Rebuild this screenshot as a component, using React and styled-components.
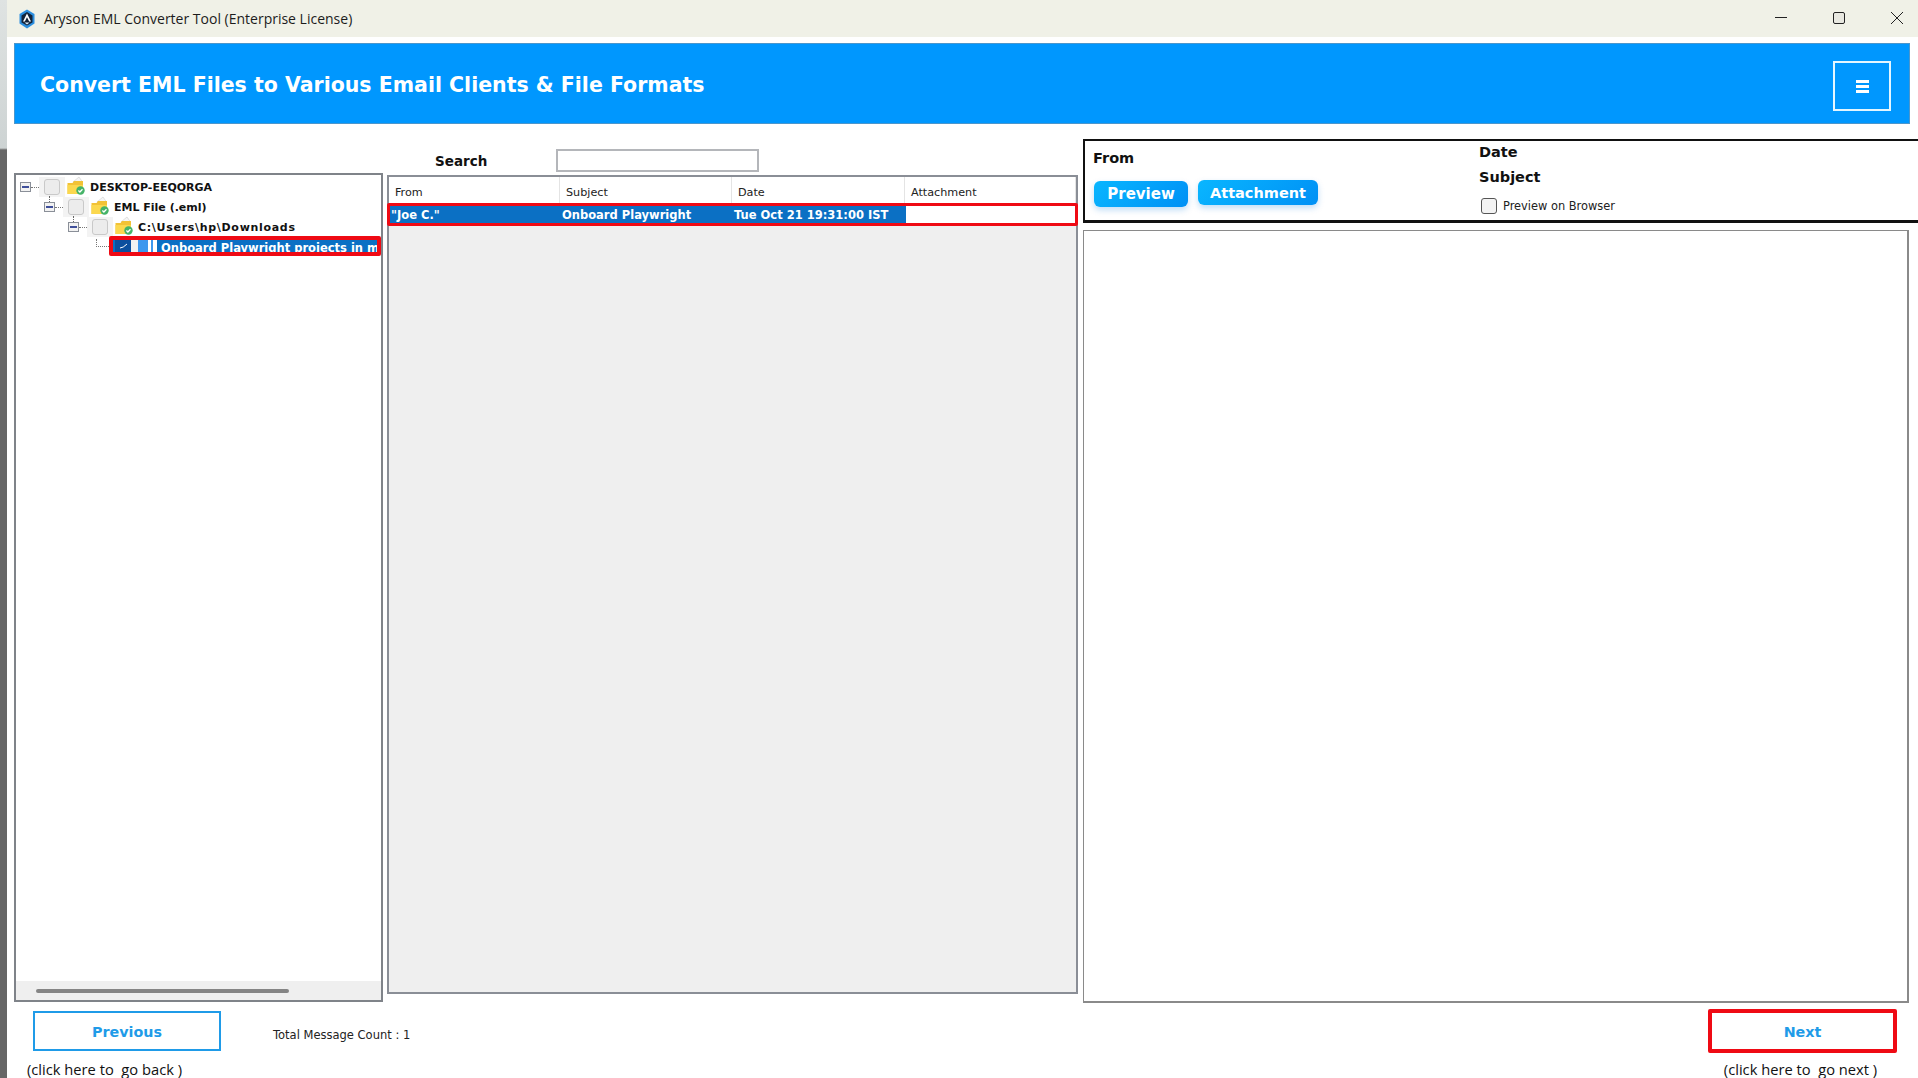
import React from 'react';
import styled, { createGlobalStyle } from 'styled-components';

const treeFont = `"DejaVu Sans", Verdana, sans-serif`;

const GlobalStyle = createGlobalStyle`
  html, body {
    margin: 0;
    padding: 0;
    height: 100%;
    overflow: hidden;
    background: #ffffff;
    font-family: ${treeFont};
  }
  * { box-sizing: border-box; }
`;

const AppLogo = () => (
  <svg width="18" height="20" viewBox="0 0 18 20">
    <path d="M9 0.5 16.5 5v9.5L9 19.5 1.5 14.5V5z" fill="#2c8fe0" />
    <path d="M9 3 14.5 6.5v7L9 16.5 3.5 13.5v-7z" fill="#12233a" />
    <path d="M9 4.5 13 12.5h-1.8L9 8.2 6.8 12.5H5z" fill="#ffffff" />
    <path d="M6.5 13.5h5L9 15.5z" fill="#d9ecfb" />
  </svg>
);

const FolderSvg = styled.svg`
  flex: none;
  margin-top: -3px;
`;

const FolderIcon = () => (
  <FolderSvg width="18" height="19" viewBox="0 0 18 19">
    <path d="M6 6 12 1l3.5 5z" fill="#f6f6f6" stroke="#cfcfcf" strokeWidth="0.6" />
    <path d="M0.5 7h5L7 5h9v13H0.5z" fill="#f2c236" />
    <path d="M0.5 9h15.5v9H0.5z" fill="#fbd84e" />
    <circle cx="13.5" cy="14.5" r="4.2" fill="#45b368" />
    <path d="M11.4 14.5l1.5 1.5 2.6-2.8" fill="none" stroke="#fff" strokeWidth="1.3" />
  </FolderSvg>
);

const Minimize = () => (
  <svg width="12" height="12" viewBox="0 0 12 12"><path d="M0 5.5h12" stroke="#222" /></svg>
);
const Maximize = () => (
  <svg width="12" height="12" viewBox="0 0 12 12"><rect x="0.5" y="0.5" width="11" height="11" rx="1.5" fill="#e8e8e0" stroke="#222" /></svg>
);
const CloseIcon = () => (
  <svg width="12" height="12" viewBox="0 0 12 12"><path d="M0 0l12 12M12 0 0 12" stroke="#222" /></svg>
);

const MenuBars = () => (
  <svg width="13" height="13" viewBox="0 0 13 13">
    <path d="M0 0h13v3H0zM0 5h13v3H0zM0 10h13v3H0z" fill="#ffffff" />
  </svg>
);

const treeItems = [
  { label: 'DESKTOP-EEQORGA', level: 0 },
  { label: 'EML File (.eml)', level: 1 },
  { label: 'C:\\Users\\hp\\Downloads', level: 2, spaced: true },
];

const columns = ['From', 'Subject', 'Date', 'Attachment'];
const message = ['"Joe C."', 'Onboard Playwright', 'Tue Oct 21 19:31:00 IST', ''];

export default function App() {
  return (
    <Page>
      <GlobalStyle />
      <DesktopEdge />
      <Window>
        <TitleBar>
          <TitleLeft>
            <AppLogo />
            <TitleText>Aryson EML Converter Tool (Enterprise License)</TitleText>
          </TitleLeft>
          <WindowControls>
            <Minimize />
            <Maximize />
            <CloseIcon />
          </WindowControls>
        </TitleBar>

        <Banner>
          <BannerTitle>Convert EML Files to Various Email Clients &amp; File Formats</BannerTitle>
          <MenuButton><MenuBars /></MenuButton>
        </Banner>

        <Main>
          <TreePanel>
            <TreeBody>
              {treeItems.map((item) => (
                <TreeRow key={item.label} $level={item.level}>
                  <Toggle $nested={item.level > 0} />
                  <TreeDots />
                  <CheckCell><GreyBox /></CheckCell>
                  <FolderIcon />
                  <TreeLabel $spaced={item.spaced}>{item.label}</TreeLabel>
                </TreeRow>
              ))}
              <LeafRow>
                <LeafDots />
                <SelectedLeaf>
                  <BlueCheck>
                    <svg width="9" height="6" viewBox="0 0 9 6">
                      <path d="M1 5q3 0 7-4" fill="none" stroke="#fff" strokeWidth="1" />
                    </svg>
                  </BlueCheck>
                  <FileIcon />
                  <LeafLabel>Onboard Playwright projects in m</LeafLabel>
                </SelectedLeaf>
              </LeafRow>
            </TreeBody>
            <TreeScroll><ScrollThumb /></TreeScroll>
          </TreePanel>

          <ListColumn>
            <SearchRow>
              <SearchLabel>Search</SearchLabel>
              <SearchInput />
            </SearchRow>
            <ListPanel>
              <ListHead>
                {columns.map((c) => <HeadCell key={c}>{c}</HeadCell>)}
              </ListHead>
              <MessageRow>
                {message.map((m, i) => <MessageCell key={i} $empty={!m}>{m}</MessageCell>)}
              </MessageRow>
            </ListPanel>
          </ListColumn>

          <PreviewColumn>
            <InfoBox>
              <InfoLeft>
                <InfoLabel>From</InfoLabel>
                <InfoButtons>
                  <PillButton>Preview</PillButton>
                  <PillButton $wide>Attachment</PillButton>
                </InfoButtons>
              </InfoLeft>
              <InfoRight>
                <InfoLabel>Date</InfoLabel>
                <SubjectLabel>Subject</SubjectLabel>
                <BrowserOption>
                  <RoundCheck />
                  <span>Preview on Browser</span>
                </BrowserOption>
              </InfoRight>
            </InfoBox>
            <PreviewBody />
          </PreviewColumn>
        </Main>

        <Footer>
          <FooterLeft>
            <PrevGroup>
              <PrevButton>Previous</PrevButton>
              <PrevHint>(click here to&nbsp; go back )</PrevHint>
            </PrevGroup>
            <TotalCount>Total Message Count : 1</TotalCount>
          </FooterLeft>
          <NextGroup>
            <NextButton>Next</NextButton>
            <NextHint>(click here to&nbsp; go next )</NextHint>
          </NextGroup>
        </Footer>
      </Window>
    </Page>
  );
}

const Page = styled.div`
  display: flex;
  width: 1918px;
  height: 1078px;
  overflow: hidden;
`;

const DesktopEdge = styled.div`
  width: 7px;
  flex: none;
  background: linear-gradient(#dfe3e2 0, #cdd3d3 148px, #666666 150px, #666666 100%);
`;

const Window = styled.div`
  flex: 1;
  min-width: 0;
  display: flex;
  flex-direction: column;
  background: #ffffff;
`;

const TitleBar = styled.div`
  height: 37px;
  flex: none;
  display: flex;
  align-items: center;
  justify-content: space-between;
  background: #f0f1e7;
`;

const TitleLeft = styled.div`
  display: flex;
  align-items: center;
  gap: 8px;
  padding-left: 11px;
`;

const TitleText = styled.span`
  font-family: "Open Sans", sans-serif;
  font-size: 14px;
  color: #1c1c1c;
`;

const WindowControls = styled.div`
  display: flex;
  align-items: center;
  gap: 46px;
  padding-right: 15px;
  margin-top: -2px;
`;

const Banner = styled.div`
  height: 81px;
  flex: none;
  margin: 6px 8px 0 7px;
  padding: 0 19px 0 26px;
  display: flex;
  align-items: center;
  justify-content: space-between;
  background: #0097fe;
  box-shadow: inset 0 0 0 1px #4b96cc;
`;

const BannerTitle = styled.div`
  font-family: ${treeFont};
  font-weight: 700;
  font-size: 20.5px;
  color: #ffffff;
  margin-top: 3px;
`;

const MenuButton = styled.div`
  width: 58px;
  height: 50px;
  margin-top: 5px;
  display: flex;
  align-items: center;
  justify-content: center;
  border: 2px solid #e4f6ff;
`;

const Main = styled.div`
  flex: none;
  height: 878px;
  display: flex;
  padding-left: 7px;
  padding-top: 14px;
`;

const TreePanel = styled.div`
  width: 369px;
  height: 829px;
  margin-top: 35px;
  flex: none;
  display: flex;
  flex-direction: column;
  border: 2px solid #7f8389;
  background: #ffffff;
`;

const TreeBody = styled.div`
  flex: 1;
  padding-top: 2px;
  overflow: hidden;
`;

const TreeRow = styled.div`
  height: 20px;
  display: flex;
  align-items: center;
  padding-left: ${(p) => 4 + p.$level * 24}px;
`;

const Toggle = styled.div`
  position: relative;
  width: 11px;
  height: 10px;
  flex: none;
  border: 1px solid #8a8f98;
  background: #f2f2f2;

  &::after {
    content: '';
    position: absolute;
    left: 1px;
    right: 1px;
    top: 3px;
    height: 2px;
    background: #3f4f9a;
  }

  &::before {
    content: '';
    display: ${(p) => (p.$nested ? 'block' : 'none')};
    position: absolute;
    left: 4px;
    top: -7px;
    height: 6px;
    border-left: 1px dotted #666;
  }
`;

const TreeDots = styled.div`
  width: 8px;
  flex: none;
  border-top: 1px dotted #777;
`;

const CheckCell = styled.div`
  width: 26px;
  height: 20px;
  flex: none;
  margin-right: 2px;
  display: flex;
  align-items: center;
  justify-content: center;
  background: #f3f3f3;
`;

const GreyBox = styled.div`
  width: 16px;
  height: 16px;
  border: 1px solid #c9c9c9;
  border-radius: 3px;
  background: #ececec;
`;

const TreeLabel = styled.span`
  margin-left: 5px;
  font-family: ${treeFont};
  font-weight: 700;
  font-size: 11px;
  letter-spacing: ${(p) => (p.$spaced ? '0.7px' : '0')};
  color: #111111;
  white-space: nowrap;
`;

const LeafRow = styled.div`
  height: 20px;
  margin-top: -1px;
  display: flex;
  align-items: center;
  padding-left: 80px;
`;

const LeafDots = styled.div`
  position: relative;
  width: 13px;
  flex: none;
  border-top: 1px dotted #777;

  &::before {
    content: '';
    position: absolute;
    left: 0;
    bottom: 0;
    height: 8px;
    border-left: 1px dotted #777;
  }
`;

const SelectedLeaf = styled.div`
  flex: 1;
  min-width: 0;
  height: 20px;
  display: flex;
  align-items: center;
  overflow: hidden;
  border: 4px solid #ef0a14;
  border-radius: 2px;
  background: #0b70c4;
`;

const BlueCheck = styled.div`
  width: 16px;
  height: 12px;
  margin-left: 2px;
  flex: none;
  display: flex;
  align-items: center;
  justify-content: center;
  background: #0c4f9e;
`;

const FileIcon = styled.div`
  width: 28px;
  height: 12px;
  flex: none;
  background: linear-gradient(
    90deg,
    #f2f2f2 0 7px,
    #3d98ee 7px 17px,
    #ffffff 17px 20px,
    #3d98ee 20px 22px,
    #ffffff 22px 26px,
    #0b70c4 26px
  );
`;

const LeafLabel = styled.span`
  font-family: ${treeFont};
  font-weight: 700;
  font-size: 11.5px;
  line-height: 14px;
  margin: 3px 0 0 2px;
  color: #ffffff;
  white-space: nowrap;
`;

const TreeScroll = styled.div`
  height: 19px;
  flex: none;
  padding: 8px 0 0 20px;
  background: #efefef;
`;

const ScrollThumb = styled.div`
  width: 253px;
  height: 4px;
  border-radius: 2px;
  background: #858585;
`;

const ListColumn = styled.div`
  width: 691px;
  flex: none;
  margin-left: 4px;
  padding-top: 11px;
  display: flex;
  flex-direction: column;
`;

const SearchRow = styled.div`
  height: 23px;
  flex: none;
  display: flex;
  align-items: center;
`;

const SearchLabel = styled.span`
  width: 169px;
  padding-left: 48px;
  font-family: ${treeFont};
  font-weight: 700;
  font-size: 13.5px;
  color: #111111;
`;

const SearchInput = styled.div`
  width: 203px;
  height: 23px;
  border: 2px solid #b4b6ba;
  background: #ffffff;
`;

const ListPanel = styled.div`
  width: 691px;
  height: 819px;
  flex: none;
  margin-top: 3px;
  border: 2px solid #8a8e96;
  background: #efefef;
`;

const ListHead = styled.div`
  height: 26px;
  display: grid;
  grid-template-columns: 171px 172px 173px 1fr;
  background: #ffffff;
`;

const HeadCell = styled.div`
  display: flex;
  align-items: center;
  padding: 5px 0 0 6px;
  font-family: ${treeFont};
  font-size: 11.2px;
  color: #222222;
  border-right: 1px solid #e4e4e4;
`;

const MessageRow = styled.div`
  height: 23px;
  margin: 0 -2px;
  display: grid;
  grid-template-columns: 171px 172px 173px 1fr;
  border: 3px solid #ef0a14;
  border-radius: 2px;
  background: #ffffff;
`;

const MessageCell = styled.div`
  display: flex;
  align-items: center;
  padding-left: 1px;
  font-family: ${treeFont};
  font-weight: 700;
  font-size: 11.5px;
  color: #ffffff;
  white-space: nowrap;
  background: ${(p) => (p.$empty ? '#ffffff' : '#0b70c4')};
`;

const PreviewColumn = styled.div`
  flex: 1;
  min-width: 0;
  margin-left: 5px;
  display: flex;
  flex-direction: column;
`;

const InfoBox = styled.div`
  height: 84px;
  flex: none;
  margin-top: 1px;
  margin-right: -2px;
  display: flex;
  border: 2px solid #111111;
  border-bottom-width: 3px;
`;

const InfoLeft = styled.div`
  width: 394px;
  padding: 8px 0 0 8px;
`;

const InfoLabel = styled.div`
  font-family: ${treeFont};
  font-weight: 700;
  font-size: 14.5px;
  line-height: 18px;
  color: #111111;
`;

const SubjectLabel = styled(InfoLabel)`
  margin-top: 7px;
`;

const InfoButtons = styled.div`
  display: flex;
  align-items: flex-start;
  gap: 10px;
  margin: 14px 0 0 1px;
`;

const PillButton = styled.div`
  width: ${(p) => (p.$wide ? 120 : 94)}px;
  height: ${(p) => (p.$wide ? 25 : 26)}px;
  margin-top: ${(p) => (p.$wide ? -1 : 0)}px;
  display: flex;
  align-items: center;
  justify-content: center;
  border-radius: 6px;
  font-family: ${treeFont};
  font-weight: 700;
  font-size: ${(p) => (p.$wide ? 14.5 : 15)}px;
  color: #ffffff;
  background: linear-gradient(135deg, #09b6ff, #0090f5);
  box-shadow: 0 3px 6px rgba(0, 120, 220, 0.25);
`;

const InfoRight = styled.div`
  padding-top: 2px;
`;

const BrowserOption = styled.label`
  display: flex;
  align-items: center;
  gap: 6px;
  margin-top: 12px;
  margin-left: 2px;
  font-family: ${treeFont};
  font-size: 11.4px;
  color: #222222;
`;

const RoundCheck = styled.span`
  width: 16px;
  height: 16px;
  border: 1px solid #555555;
  border-radius: 3px;
  background: #f3f3f3;
`;

const PreviewBody = styled.div`
  width: 826px;
  height: 773px;
  flex: none;
  margin-top: 7px;
  border-style: solid;
  border-color: #8a8a8a;
  border-width: 1px 2px 2px 1px;
  background: #ffffff;
`;

const Footer = styled.div`
  flex: 1;
  display: flex;
  justify-content: space-between;
  align-items: flex-start;
  padding: 7px 21px 0 26px;
`;

const FooterLeft = styled.div`
  display: flex;
  align-items: flex-start;
`;

const PrevGroup = styled.div`
  display: flex;
  flex-direction: column;
  align-items: flex-start;
`;

const NextGroup = styled.div`
  display: flex;
  flex-direction: column;
  align-items: center;
`;

const PrevButton = styled.div`
  width: 188px;
  height: 40px;
  margin-top: 2px;
  padding-top: 1px;
  display: flex;
  align-items: center;
  justify-content: center;
  border: 2px solid #1f9be8;
  font-family: ${treeFont};
  font-weight: 700;
  font-size: 14.3px;
  color: #1f9be8;
`;

const NextButton = styled(PrevButton)`
  width: 189px;
  height: 44px;
  margin-top: 0;
  border: 4px solid #ef0a14;
  border-radius: 2px;
`;

const Hint = styled.div`
  font-family: "Open Sans", sans-serif;
  font-size: 14.7px;
  line-height: 16px;
  color: #111111;
  white-space: nowrap;
`;

const PrevHint = styled(Hint)`
  margin: 10px 0 0 -6px;
`;

const NextHint = styled(Hint)`
  margin: 8px 4px 0 0;
`;

const TotalCount = styled.div`
  margin: 19px 0 0 52px;
  font-family: ${treeFont};
  font-size: 11.5px;
  color: #222222;
`;
